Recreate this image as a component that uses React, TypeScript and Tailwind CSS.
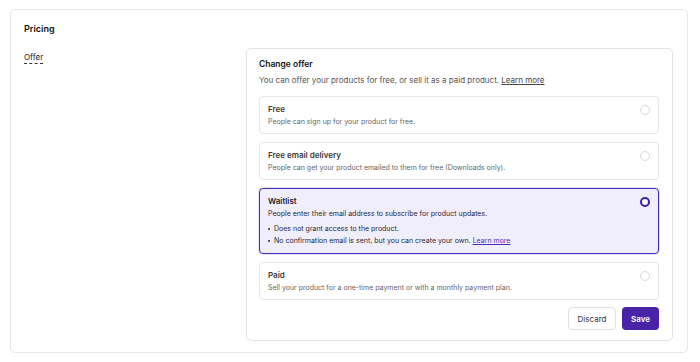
import React from "react";

function Radio({ checked }: { checked?: boolean }) {
  return checked ? (
    <span className="block w-[10px] h-[10px] rounded-full border-[2.5px] border-[#3d1ea6] bg-white shrink-0" />
  ) : (
    <span className="block w-[10px] h-[10px] rounded-full border border-[#d9d9d9] bg-white shrink-0" />
  );
}

function Option({
  title,
  desc,
  checked,
  children,
}: {
  title: string;
  desc: string;
  checked?: boolean;
  children?: React.ReactNode;
}) {
  return (
    <div
      className={
        checked
          ? "flex justify-between rounded-[4px] border border-[#4b2bbd] bg-[#f1eefb] pl-[8px] pr-[8px] pt-[7px] pb-[7px] shadow-[0_0_0_1px_rgba(75,43,189,0.15)]"
          : "flex justify-between rounded-[4px] border border-[#e6e6e6] bg-white pl-[8px] pr-[8px] pt-[7px] pb-[6px]"
      }
    >
      <div className="flex flex-col">
        <div className={checked ? "text-[8px] leading-[11px] font-semibold text-[#1c1a2e]" : "text-[8px] leading-[11px] font-semibold text-[#3a3a3a]"}>
          {title}
        </div>
        <div className={checked ? "mt-[2px] text-[7px] leading-[10px] text-[#2a2838]" : "mt-[2px] text-[7px] leading-[10px] text-[#666]"}>
          {desc}
        </div>
        {children}
      </div>
      <div className="pt-[1px]">
        <Radio checked={checked} />
      </div>
    </div>
  );
}

export default function App() {
  return (
    <div
      className="w-[700px] h-[362px] bg-white pt-[9px] pl-[10px] pr-[12px]"
      style={{ fontFamily: "Inter, 'Noto Sans', sans-serif" }}
    >
      <div className="h-[344px] rounded-[5px] border border-[#e6e6e6] pl-[13px] pr-[14px] pt-[13px]">
        <div className="text-[9px] leading-[12px] font-semibold text-[#111]">Pricing</div>
        <div className="mt-[13px] flex">
          <div className="w-[222px] pt-[1px] leading-[11px]">
            <span className="inline-block text-[8px] leading-[11px] text-[#222] border-b border-dashed border-[#333]">
              Offer
            </span>
          </div>
          <div className="w-[427px] rounded-[5px] border border-[#e3e3e3] pl-[12px] pr-[13px] pt-[9px] pb-[10px]">
            <div className="text-[8.5px] leading-[12px] font-semibold text-[#111]">Change offer</div>
            <div className="mt-[5px] text-[8px] leading-[11px] text-[#555]">
              You can offer your products for free, or sell it as a paid product.{" "}
              <span className="underline text-[#444]">Learn more</span>
            </div>
            <div className="mt-[10px] flex flex-col gap-[8px]">
              <Option title="Free" desc="People can sign up for your product for free." />
              <Option
                title="Free email delivery"
                desc="People can get your product emailed to them for free (Downloads only)."
              />
              <Option
                title="Waitlist"
                desc="People enter their email address to subscribe for product updates."
                checked
              >
                <ul className="mt-[5px] flex flex-col gap-[2px] text-[7px] leading-[10px] text-[#2a2838]">
                  <li className="flex items-center gap-[4px]">
                    <span className="w-[2px] h-[2px] rounded-full bg-[#2a2838]" />
                    Does not grant access to the product.
                  </li>
                  <li className="flex items-center gap-[4px]">
                    <span className="w-[2px] h-[2px] rounded-full bg-[#2a2838]" />
                    <span>
                      No confirmation email is sent, but you can create your own.{" "}
                      <span className="underline text-[#4b2bbd]">Learn more</span>
                    </span>
                  </li>
                </ul>
              </Option>
              <Option
                title="Paid"
                desc="Sell your product for a one-time payment or with a monthly payment plan."
              />
            </div>
            <div className="mt-[7px] flex justify-end gap-[6px]">
              <button className="h-[23px] w-[48px] rounded-[4px] border border-[#e0e0e0] bg-white text-[8px] text-[#333]">
                Discard
              </button>
              <button className="h-[23px] w-[37px] rounded-[4px] bg-[#4a22a8] text-[8px] font-semibold text-white">
                Save
              </button>
            </div>
          </div>
        </div>
      </div>
    </div>
  );
}
